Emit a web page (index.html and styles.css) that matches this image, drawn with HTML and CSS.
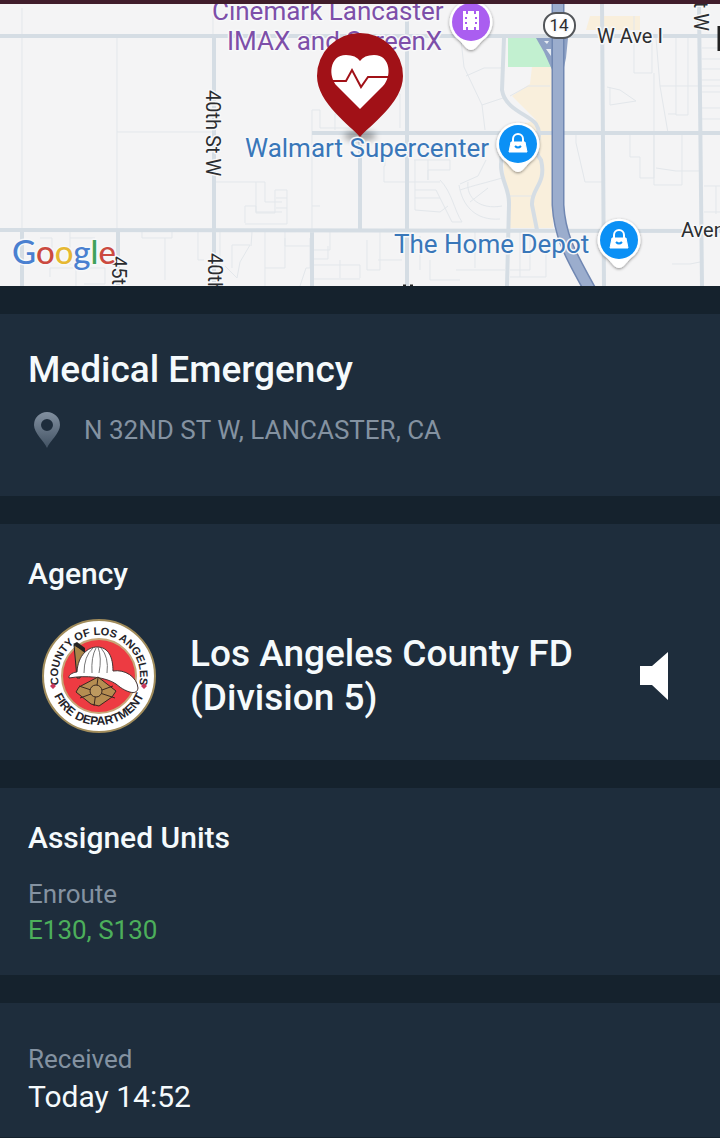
FILE: index.html
```
<!DOCTYPE html>
<html lang="en">

<head>
  <meta charset="utf-8">
  <meta name="viewport" content="width=device-width, initial-scale=1">
  <title>Medical Emergency</title>
  <link rel="stylesheet" href="styles.css">
</head>

<body>
  <div class="map">
    <svg class="map-canvas" viewBox="0 4 720 282" preserveAspectRatio="xMidYMid slice" role="img" aria-label="Incident map">
      <defs>
        <g id="poi">
          <path d="M0 28C-4 28 -7 23 -12 18A21.500 21.500 0 1 1 12 18C7 23 4 28 0 28Z" fill="#fff" />
        </g>
        <g id="bag">
          <path d="M-7 -1H7L9 9H-9Z" fill="#fff" stroke="#fff" stroke-linejoin="round" />
          <path d="M-5 -1V-4A5 5 0 0 1 5 -4V-1" fill="none" stroke="#fff" stroke-width="2" />
          <path d="M-3 3Q0 6 3 3" fill="none" stroke="#0b90f5" stroke-width="2" />
        </g>
        <filter id="soft" x="-50%" y="-50%" width="200%" height="200%">
          <feGaussianBlur stdDeviation="3" />
        </filter>
        <filter id="drop" x="-30%" y="-30%" width="160%" height="160%">
          <feDropShadow dx="0" dy="1" stdDeviation="1.500" flood-color="#000" flood-opacity=".45" />
        </filter>
      </defs>

      <!-- land -->
      <rect y="4" width="720" height="282" fill="#f4f4f5" />
      <path d="M508 38H552V67H508Z" fill="#c2f0d0" />
      <path d="M532 67H553V228H508L509 205L504 180V130L536 120L512 96L530 84Z" fill="#f9efdc" />
      <path d="M590 16H640V30H586Z" fill="#f9efdc" />

      <!-- minor streets -->
      <g class="minor">
        <path d="M22 8V286M117 36V230M117 132H213M213 182H265V202H282M256 182V212H282M245 223V206H256V213H275V190H287V224H245M287 198H276M287 208H276" />
        <path d="M213 15V36M312 230V110H320V128H360V100M335 130V114H345V94H400V128M312 206H320M40 238H52V264M70 232V265M70 238H95M50 277V268H76V286M88 268H105V284H84M142 232V238H165V280M165 238H172V232M198 232V260H204M220 232V280M232 268V245H250L240 262L237 278L225 266M252 232L251 246M265 232V286M285 238V268H265M285 232V246H310M300 286L306 268H310V238M330 232V250H312M328 246V259H312M312 265H360V278M340 260V278M312 279H360M367 240V270H380V232M378 260H402M420 236V270M430 260V280H460M475 232V268" />
        <path d="M385 155V166H384V182H440M440 180C452 192 454 210 462 222H452L436 190M414 160H450V170H428V180M428 160V180M415 160V210L440 212L448 206M415 190H436M415 198H440M460 190C475 185 485 183 502 178M459 185C462 205 475 221 500 219M468 182C466 198 480 210 502 206M460 184L478 176L486 160M488 188L470 202" />
        <path d="M461 40L464 67L482 105L485 130M466 76L484 68H501M482 105L503 98M510 96L528 86H550M576 135V143L585 182H602M607 87L620 90L636 101L610 105V87M630 135V157H640V178H654V135M634 16V73H652V38M654 73V185H682V135M656 38L660 86H720M660 86L668 133M676 38V115H688V38M668 114H676M720 48H702M720 59H702M720 69H702M720 80H702M720 92H702M720 108H702M720 119H702M656 168L676 171H702M510 196H532M704 186H720M716 186V214M704 212H720M672 264H690L700 262M456 270H505M530 235V270H510M546 240V277H510M520 232V277" />
      </g>

      <!-- main streets -->
      <g class="road">
        <path d="M0 36L213 36H720M0 230L720 231M312 133H720M214 36V286M360 133V230M312 231V286M407 20V286" />
        <path d="M602 4L604 286M699 4L702 286M118 230V286M22 230V286M504 38L502 90C505 110 530 115 536 124C545 138 530 147 541 160C547 184 531 188 532 205L537 230M503 148C496 180 510 184 509 205L507 286" />
      </g>

      <!-- highway -->
      <path d="M536 38H568L566 58L563 72H553L544 52Z" fill="#8fa2c5" />
      <path d="M544 41H549L547 44ZM546 49H551V56Z" fill="#e6ebf2" />
      <g fill="none">
        <path d="M558 4L558 205C560 240 574 260 590 290" stroke="#7087b2" stroke-width="13" />
        <path d="M558 4L558 205C560 240 574 260 590 290" stroke="#9badcd" stroke-width="10" />
      </g>
      <rect x="544" y="13" width="31" height="25" rx="12" fill="#fff" stroke="#53565a" stroke-width="2" />
      <text class="shield" x="559" y="31" text-anchor="middle">14</text>

      <!-- labels -->
      <g class="label-purple">
        <text x="212" y="20">Cinemark Lancaster</text>
        <text x="227" y="50">IMAX and ScreenX</text>
      </g>
      <g class="label-dark">
        <text x="597" y="43">W Ave I</text>
        <text x="681" y="237">Aven</text>
        <text transform="translate(206 90) rotate(90)">40th St W</text>
        <text transform="translate(208 253) rotate(90)">40th</text>
        <text transform="translate(112 256) rotate(90)">45th</text>
        <text transform="translate(694 31) rotate(90)" text-anchor="end">t W</text>
        <path d="M403 286H406M410 286H413M719 26V51" stroke="#222" stroke-width="3" />
      </g>

      <!-- places -->
      <g transform="translate(471 22)">
        <use href="#poi" filter="url(#drop)" />
        <circle r="19" fill="#aa5ef0" />
        <path d="M-8 -11H-5V-8H-3V-11H3V-8H5V-11H8V8H5V5H3V8H-3V5H-5V8H-8Z" fill="#fff" />
        <path d="M-5 -5V-3M-5 0V2M5 -5V-3M5 0V2" stroke="#aa5ef0" stroke-width="2" />
      </g>
      <g transform="translate(518 144)">
        <use href="#poi" filter="url(#drop)" />
        <circle r="19" fill="#0b90f5" />
        <use href="#bag" transform="translate(0 -1)" />
      </g>
      <g transform="translate(619 240)">
        <use href="#poi" filter="url(#drop)" />
        <circle r="19" fill="#0b90f5" />
        <use href="#bag" transform="translate(0 -1)" />
      </g>

      <!-- incident pin -->
      <ellipse cx="360" cy="136" rx="16" ry="5" fill="#000" opacity=".35" filter="url(#soft)" />
      <g class="label-blue">
        <text x="245" y="157">Walmart Supercenter</text>
        <text x="394" y="253">The Home Depot</text>
      </g>
      <path d="M360 137C351 126 317 103 317 76A43 43 0 0 1 403 76C403 103 369 126 360 137Z" fill="#a11117" />
      <path d="M360 109L337 86C328 77 329 55 346 55Q356 55 360 61Q364 55 374 55C391 55 392 77 383 86Z" fill="#fff" />
      <path d="M330 81H346L352 70L361 87L368 77H391" fill="none" stroke="#a11117" stroke-width="2" />

      <text class="google" x="12" y="264"><tspan fill="#4a80d0">G</tspan><tspan fill="#cb4a40">o</tspan><tspan fill="#e6b832">o</tspan><tspan fill="#4a80d0">g</tspan><tspan fill="#3fa15a">l</tspan><tspan fill="#cb4a40">e</tspan></text>
    </svg>
  </div>

  <main class="details">
    <section class="card incident">
      <h1 class="title">Medical Emergency</h1>
      <div class="address">
        <svg class="address-icon" viewBox="0 0 26 36" aria-hidden="true">
          <defs>
            <linearGradient id="pin" x2="0" y2="1">
              <stop stop-color="#8290a0" />
              <stop offset="1" stop-color="#425263" />
            </linearGradient>
          </defs>
          <path fill="url(#pin)" fill-rule="evenodd" d="M13 36C10 29 0 21 0 13A13 13 0 0 1 26 13C26 21 16 29 13 36ZM13 7A6 6 0 1 0 13 19A6 6 0 1 0 13 7Z" />
        </svg>
        <span>N 32ND ST W, LANCASTER, CA</span>
      </div>
    </section>

    <section class="card agency">
      <h2 class="heading">Agency</h2>
      <div class="agency-row">
        <svg class="seal" viewBox="0 0 116 116" role="img" aria-label="County of Los Angeles Fire Department">
          <defs>
            <path id="arc-top" d="M19.500 72A41 41 0 1 1 96.500 72" />
            <path id="arc-bottom" d="M9 58A49 49 0 0 0 107 58" />
          </defs>
          <circle cx="58" cy="58" r="56" fill="#fff" stroke="#a18c5b" stroke-width="2" />
          <circle cx="58" cy="58" r="37" fill="#ed3b42" stroke="#c8a577" stroke-width="2" />
          <text class="seal-text seal-top" text-anchor="middle"><textPath href="#arc-top" startOffset="50%">COUNTY OF LOS ANGELES</textPath></text>
          <text class="seal-text" text-anchor="middle"><textPath href="#arc-bottom" startOffset="50%">FIRE DEPARTMENT</textPath></text>
          <path d="M12 65L15 68L12 71L9 68ZM103 65L106 68L103 71L100 68Z" fill="#c8385b" />
          <path d="M33 27L44 33L39 60H36Z" fill="#aa8548" stroke="#222" />
          <path d="M32 26L36 24L44 30V35Z" fill="#222" />
          <path d="M28 60C27 56 34 54 36 54C37 37 47 29 56 29C68 29 72 40 72 53C84 51 96 59 97 70C96 79 83 73 75 66C65 59 45 57 28 60Z" fill="#fff" stroke="#443333" />
          <path d="M43 55Q43 38 52 30M51 55Q50 39 55 30M58 55Q61 40 57 29M66 55Q68 39 60 30" fill="none" stroke="#777" />
          <path d="M57 59L75 73L71 79L58 88L50 86L35 74L38 69Z" fill="#b58d51" stroke="#392820" stroke-width="1" />
          <path d="M38 68L74 80M39 80L72 68M57 60L53 88" stroke="#392820" />
          <circle cx="55" cy="73" r="6" fill="#bd995f" stroke="#392820" />
        </svg>
        <p class="agency-name">Los Angeles County FD (Division 5)</p>
        <button class="listen" type="button" aria-label="Listen to agency radio">
          <svg class="listen-icon" viewBox="0 0 28 48" aria-hidden="true">
            <path d="M0 14H12L28 0V48L12 33H0Z" fill="#fff" />
          </svg>
        </button>
      </div>
    </section>

    <section class="card units">
      <h2 class="heading">Assigned Units</h2>
      <dl class="field">
        <dt>Enroute</dt>
        <dd class="enroute">E130, S130</dd>
      </dl>
    </section>

    <section class="card received">
      <dl class="field">
        <dt>Received</dt>
        <dd class="time">Today 14:52</dd>
      </dl>
    </section>
  </main>
</body>

</html>
```

FILE: styles.css
```
* {
  box-sizing: border-box;
}

body {
  margin: 0;
  background: #15222d;
  color: #f5fafc;
  font-family: Roboto, "Liberation Sans", sans-serif;
}

h1,
h2,
p,
dl,
dd {
  margin: 0;
}

/* map */
.map {
  border-top: 4px solid #401d2b;
}

.map-canvas {
  display: block;
  width: 100%;
  height: 282px;
}

.map-canvas text {
  paint-order: stroke;
  stroke: #f7f8f9;
  stroke-width: 3px;
  stroke-linejoin: round;
}

.minor {
  fill: none;
  stroke: #e3e7eb;
  stroke-width: 1px;
}

.road {
  fill: none;
  stroke: #d5dde4;
  stroke-width: 4px;
}

.label-purple {
  fill: #7d4fa9;
  font-size: 26px;
}

.label-blue {
  fill: #3977b9;
  font-size: 26px;
}

.label-dark {
  fill: #2b2d30;
  font-size: 20px;
}

.shield {
  fill: #2b2d30;
  font-size: 17px;
}

.google {
  font-family: Lato, sans-serif;
  font-size: 33px;
  font-weight: 500;
}

/* details */
.details {
  display: flex;
  flex-direction: column;
  gap: 28px;
  padding-top: 28px;
}

.card {
  padding: 32px 28px;
  background: #1e2d3c;
}

.title,
.agency-name {
  font-size: 37px;
  font-weight: 500;
  line-height: 44px;
}

.heading {
  font-size: 30px;
  font-weight: 500;
  line-height: 36px;
}

.incident {
  padding-top: 34px;
  padding-bottom: 48px;
}

.address {
  display: flex;
  align-items: center;
  gap: 24px;
  margin-top: 20px;
  padding-left: 6px;
  color: #8492a1;
  font-size: 26px;
  line-height: 36px;
}

.address-icon {
  flex: none;
  width: 26px;
  height: 36px;
}

.agency {
  padding-bottom: 26px;
}

.agency-row {
  display: flex;
  align-items: center;
  margin-top: 26px;
  padding-left: 13px;
}

.seal {
  flex: none;
  width: 116px;
  height: 116px;
}

.seal-text {
  fill: #242329;
  font-family: "Liberation Sans", sans-serif;
  font-size: 12px;
  font-weight: 700;
}

.seal-top {
  font-size: 11px;
}

.agency-name {
  flex: 1;
  margin-left: 33px;
}

.listen {
  flex: none;
  padding: 12px 24px;
  border: 0;
  background: none;
  cursor: pointer;
}

.listen-icon {
  display: block;
  width: 28px;
  height: 48px;
}

.field {
  color: #8492a1;
  font-size: 26px;
  line-height: 36px;
}

.units .field {
  margin-top: 20px;
}

.units {
  padding-bottom: 27px;
}

.enroute {
  color: #4caf5b;
}

.received {
  padding-top: 38px;
  padding-bottom: 20px;
}

.time {
  color: #f5fafc;
  font-size: 30px;
  line-height: 40px;
}
```
